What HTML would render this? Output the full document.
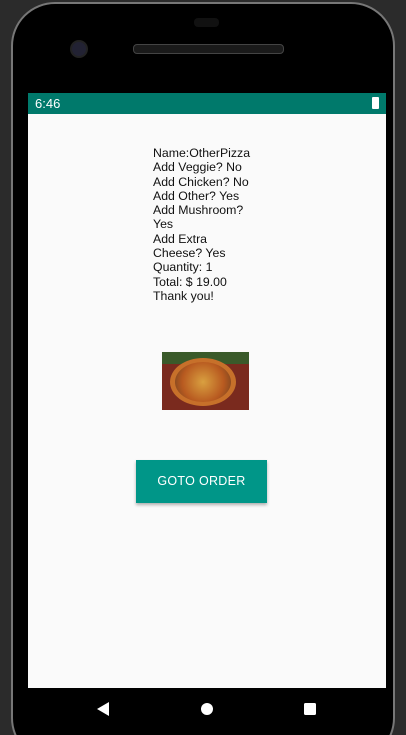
<!DOCTYPE html>
<html style="overflow:hidden;height:735px"><head><style>
body{margin:0;width:406px;height:735px;background:#2b2b2b;position:relative;overflow:hidden;font-family:"Liberation Sans",sans-serif}
.phone{position:absolute;left:11px;top:2px;width:384px;height:760px;background:#000;border-radius:44px;border:2px solid #777;box-sizing:border-box}
.screen{position:absolute;left:28px;top:114px;width:358px;height:574px;background:#fafafa}
.status{position:absolute;left:28px;top:93px;width:358px;height:21px;background:#00796b;color:#fff;font-size:13px}
.txt{position:absolute;left:153px;top:146px;font-size:12.3px;line-height:14.3px;color:#111}
.btn{position:absolute;left:136px;top:460px;width:131px;height:43px;background:#009688;color:#fff;font-size:12.5px;text-align:center;line-height:43px;box-shadow:0 2px 3px rgba(0,0,0,.3);letter-spacing:.3px}
</style></head><body>
<div class="phone"></div>
<div style="position:absolute;left:72px;top:42px;width:14px;height:14px;border-radius:50%;background:#223;box-shadow:0 0 0 2px #222"></div>
<div style="position:absolute;left:133px;top:44px;width:149px;height:8px;border-radius:4px;background:#1a1a1a;border:1px solid #444"></div>
<div style="position:absolute;left:194px;top:18px;width:25px;height:9px;border-radius:4px;background:#111"></div>
<div class="status"><span style="position:absolute;left:7px;top:3px">6:46</span><div style="position:absolute;right:7px;top:4px;width:7px;height:12px;background:#fff;border-radius:1px"></div></div>
<div class="screen"></div>
<div class="txt">Name:OtherPizza<br>Add Veggie? No<br>Add Chicken? No<br>Add Other? Yes<br>Add Mushroom?<br>Yes<br>Add Extra<br>Cheese? Yes<br>Quantity: 1<br>Total: $ 19.00<br>Thank you!</div>
<div style="position:absolute;left:162px;top:352px;width:87px;height:58px;background:#7a2a1e;overflow:hidden">
<div style="position:absolute;left:0;top:0;width:87px;height:12px;background:#3a5a2a"></div>
<div style="position:absolute;left:8px;top:6px;width:66px;height:48px;border-radius:50%;background:#c7702a"></div>
<div style="position:absolute;left:13px;top:10px;width:56px;height:40px;border-radius:50%;background:radial-gradient(circle,#d9a040 0%,#b85a20 60%,#6a4020 100%)"></div>
</div>
<div class="btn">GOTO ORDER</div>
<svg style="position:absolute;left:0;top:688px" width="406" height="47">
<polygon points="97,21 109,14 109,28" fill="#fff"/>
<circle cx="207" cy="21" r="6" fill="#fff"/>
<rect x="304" y="15" width="12" height="12" rx="1.5" fill="#fff"/>
</svg>
</body></html>
